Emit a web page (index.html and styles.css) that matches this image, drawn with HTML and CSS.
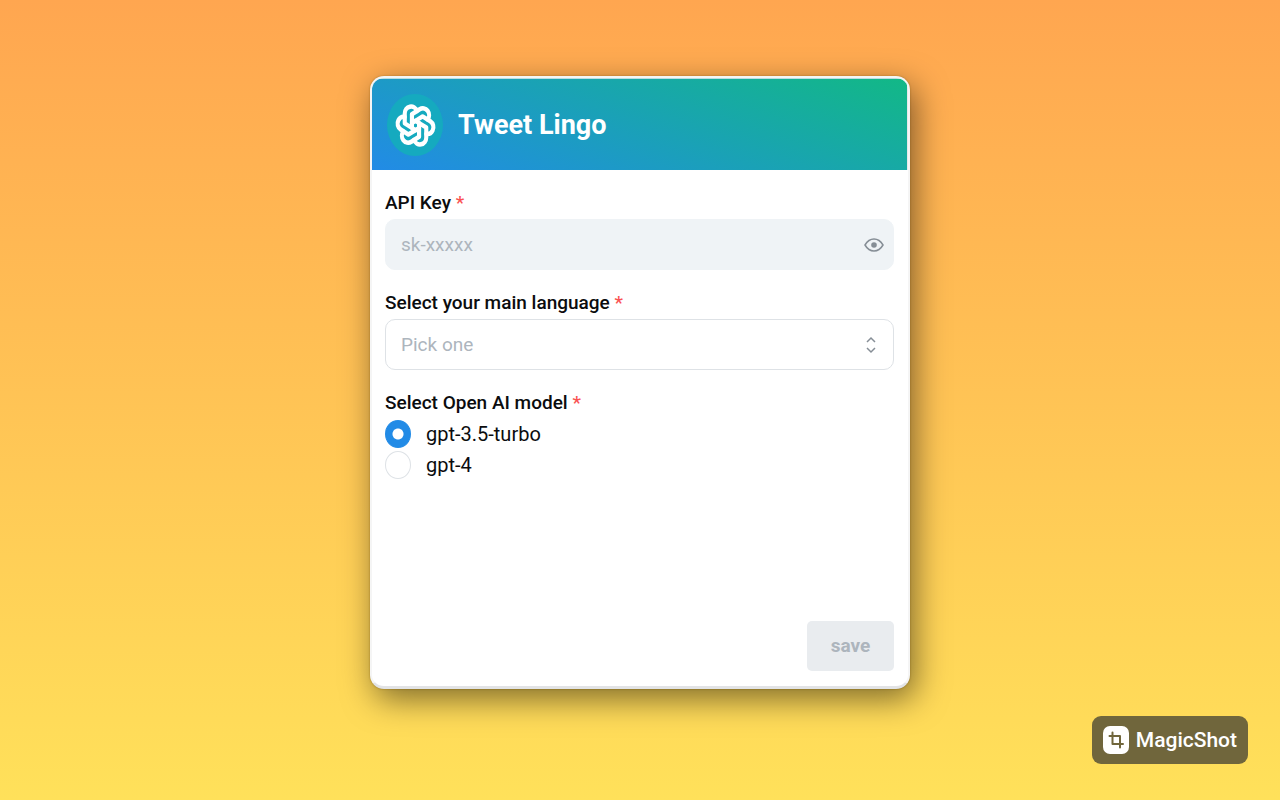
FILE: index.html
```html
<!DOCTYPE html>
<html lang="en">
<head>
<meta charset="utf-8">
<meta name="viewport" content="width=device-width, initial-scale=1">
<title>Tweet Lingo</title>
<link rel="stylesheet" href="styles.css">
</head>
<body>
<main class="card">
  <header class="header">
    <span class="logo">
      <svg class="logo-mark" viewBox="0 0 24 24" preserveAspectRatio="none" aria-hidden="true">
        <path d="M11.217 19.384a3.501 3.501 0 0 0 6.783 -1.217v-5.167l-6 -3.35"/>
        <path d="M5.214 15.014a3.501 3.501 0 0 0 4.446 5.266l4.34 -2.534v-6.946"/>
        <path d="M6 7.63c-1.391 -.236 -2.787 .395 -3.534 1.689a3.474 3.474 0 0 0 1.271 4.745l4.263 2.514l6 -3.348"/>
        <path d="M12.783 4.616a3.501 3.501 0 0 0 -6.783 1.217v5.067l6 3.45"/>
        <path d="M18.786 8.986a3.501 3.501 0 0 0 -4.446 -5.266l-4.34 2.534v6.946"/>
        <path d="M18 16.302c1.391 .236 2.787 -.395 3.534 -1.689a3.474 3.474 0 0 0 -1.271 -4.745l-4.308 -2.514l-5.955 3.42"/>
      </svg>
    </span>
    <h1 class="title">Tweet Lingo</h1>
  </header>
  <form class="form">
    <div class="field">
      <label class="label" for="key">API Key <span class="required">*</span></label>
      <div class="control control-filled">
        <input class="input" id="key" type="password" placeholder="sk-xxxxx">
        <button class="reveal" type="button" aria-label="Show key">
          <svg class="eye" viewBox="0 0 20 16" preserveAspectRatio="none" aria-hidden="true">
            <path d="M1 8C3.200 4.200 6.300 2 10 2s6.800 2.200 9 6c-2.200 3.800-5.300 6-9 6S3.200 11.800 1 8z"/>
            <circle cx="10" cy="8" r="2.800"/>
          </svg>
        </button>
      </div>
    </div>
    <div class="field">
      <label class="label" for="language">Select your main language <span class="required">*</span></label>
      <div class="control control-outlined">
        <select class="input select" id="language"><option>Pick one</option></select>
        <svg class="chevrons" viewBox="0 0 10 18" aria-hidden="true"><path d="M1 6L5 2l4 4M1 12l4 4l4-4"/></svg>
      </div>
    </div>
    <fieldset class="field models">
      <legend class="label">Select Open AI model <span class="required">*</span></legend>
      <label class="option"><input class="radio" type="radio" name="model" checked>gpt-3.5-turbo</label>
      <label class="option"><input class="radio" type="radio" name="model">gpt-4</label>
    </fieldset>
    <button class="save" type="submit" disabled>save</button>
  </form>
</main>
<aside class="badge">
  <svg class="badge-icon" viewBox="0 0 26 28" aria-hidden="true">
    <rect width="26" height="28" rx="7" fill="#fff"/>
    <path d="M6.500 10h10.500v11.500M9.500 6.500v11.500h10.500" fill="none" stroke="#70663c" stroke-width="2" stroke-linecap="round" stroke-linejoin="round"/>
  </svg>
  <span>MagicShot</span>
</aside>
</body>
</html>
```
FILE: styles.css
```css
* {
  box-sizing: border-box;
}

body {
  margin: 0;
  min-height: 100vh;
  padding: 76px 32px;
  background: linear-gradient(#ffa650, #ffe15a);
  font-family: Roboto, "Liberation Sans", sans-serif;
  font-size: 19px;
  line-height: 32px;
  color: #0b0c0e;
}

button,
input,
select {
  font: inherit;
}

.card {
  display: flex;
  flex-direction: column;
  max-width: 540px;
  min-height: 613px;
  margin: 0 auto;
  overflow: hidden;
  border: 2px solid #f5f5f5;
  border-bottom: 3px solid #e2e3e5;
  border-radius: 14px;
  background: #fff;
  box-shadow: 5px 10px 32px rgba(0, 0, 0, 0.5), 0 0 2px rgba(150, 100, 0, 0.6);
}

.header {
  display: flex;
  align-items: center;
  gap: 15px;
  padding: 15px 15px 14px;
  border-top: 1px solid #b9dfe0;
  border-right: 1px solid #e6e8ea;
  background: linear-gradient(20deg, #228be6, #12b886);
}

.logo {
  display: flex;
  align-items: center;
  justify-content: center;
  width: 56px;
  height: 62px;
  border-radius: 50%;
  background: #15aabf;
}

.logo-mark {
  width: 43px;
  height: 47px;
  fill: none;
  stroke: #fff;
  stroke-width: 2.3;
  stroke-linecap: round;
  stroke-linejoin: round;
}

.title {
  margin: 0;
  font-size: 27px;
  font-weight: 700;
  color: #fff;
}

.form {
  display: flex;
  flex: 1;
  flex-direction: column;
  gap: 17px;
  padding: 17px 14px 15px 13px;
}

.field {
  display: flex;
  flex-direction: column;
}

.models {
  margin: 0;
  padding: 0;
  border: 0;
}

.label {
  padding: 0;
  font-weight: 500;
}

.models .label {
  line-height: 31px;
}

.required {
  color: #fa5252;
}

.control {
  display: flex;
  align-items: center;
  height: 51px;
  border: 1px solid #dee2e6;
  border-radius: 10px;
  position: relative;
}

.control-filled {
  border-color: #eff3f6;
  background: #eff3f6;
}

.input {
  flex: 1;
  min-width: 0;
  height: 100%;
  padding: 0 15px;
  border: 0;
  background: transparent;
  color: #adb5bd;
}

.input::placeholder {
  color: #adb5bd;
  opacity: 1;
}

.select {
  appearance: none;
}

.reveal {
  display: flex;
  padding: 0 9px;
  border: 0;
  background: none;
}

.eye {
  width: 20px;
  height: 16px;
  fill: none;
  stroke: #868e96;
  stroke-width: 1.5;
}

.eye circle {
  fill: #868e96;
  stroke: none;
}

.chevrons {
  position: absolute;
  right: 17px;
  width: 10px;
  height: 18px;
  fill: none;
  stroke: #868e96;
  stroke-width: 1.5;
  pointer-events: none;
}

.option {
  display: flex;
  align-items: center;
  gap: 15px;
  height: 31px;
  font-size: 20px;
}

.radio {
  appearance: none;
  width: 26px;
  height: 28px;
  margin: 0;
  border: 1px solid #dee2e6;
  border-radius: 50%;
  background: #fff;
}

.radio:checked {
  border-color: #228be6;
  background: radial-gradient(circle, #fff 5px, #228be6 6px);
}

.save {
  align-self: flex-end;
  width: 87px;
  height: 50px;
  margin-top: auto;
  border: 0;
  border-radius: 5px;
  background: #e9ecef;
  font-weight: 700;
  color: #adb5bd;
}

.badge {
  position: fixed;
  right: 32px;
  bottom: 36px;
  display: flex;
  align-items: center;
  gap: 7px;
  height: 48px;
  padding: 0 11px;
  border-radius: 9px;
  background: #70663c;
  font-size: 21px;
  font-weight: 500;
  color: #fff;
}

.badge-icon {
  width: 26px;
  height: 28px;
}
```
